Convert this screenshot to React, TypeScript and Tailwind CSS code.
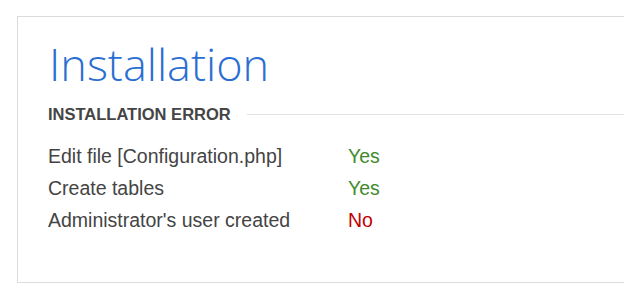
const rows = [
  { label: "Edit file [Configuration.php]", ok: true },
  { label: "Create tables", ok: true },
  { label: "Administrator's user created", ok: false },
];

const App = () => {
  return (
    <div className="w-[624px] h-[302px] bg-white pt-4 pl-[17px] overflow-hidden">
      <div className="h-[267px] w-[640px] border border-[#dcdcdc] pl-[30px] pt-[17px]">
        <h1 className="font-['Open_Sans',sans-serif] font-light text-[45px] leading-[60px] text-[#2a6ed2] pl-px">
          Installation
        </h1>
        <div className="flex items-center gap-4 mt-[10px]">
          <h2 className="font-['Liberation_Sans',Arial,sans-serif] font-bold text-[16.5px] leading-[20px] text-[#454545] shrink-0">
            INSTALLATION ERROR
          </h2>
          <div className="flex-1 border-t border-[#e3e3e3]"></div>
        </div>
        <div className="mt-[16px] flex flex-col font-['Liberation_Sans',Arial,sans-serif] text-[19.5px] leading-[32px] text-[#444]">
          {rows.map((r) => (
            <div key={r.label} className="flex">
              <span className="w-[300px]">{r.label}</span>
              <span className={r.ok ? "text-[#3f8a2e]" : "text-[#c40000]"}>
                {r.ok ? "Yes" : "No"}
              </span>
            </div>
          ))}
        </div>
      </div>
    </div>
  );
};

export default App;
